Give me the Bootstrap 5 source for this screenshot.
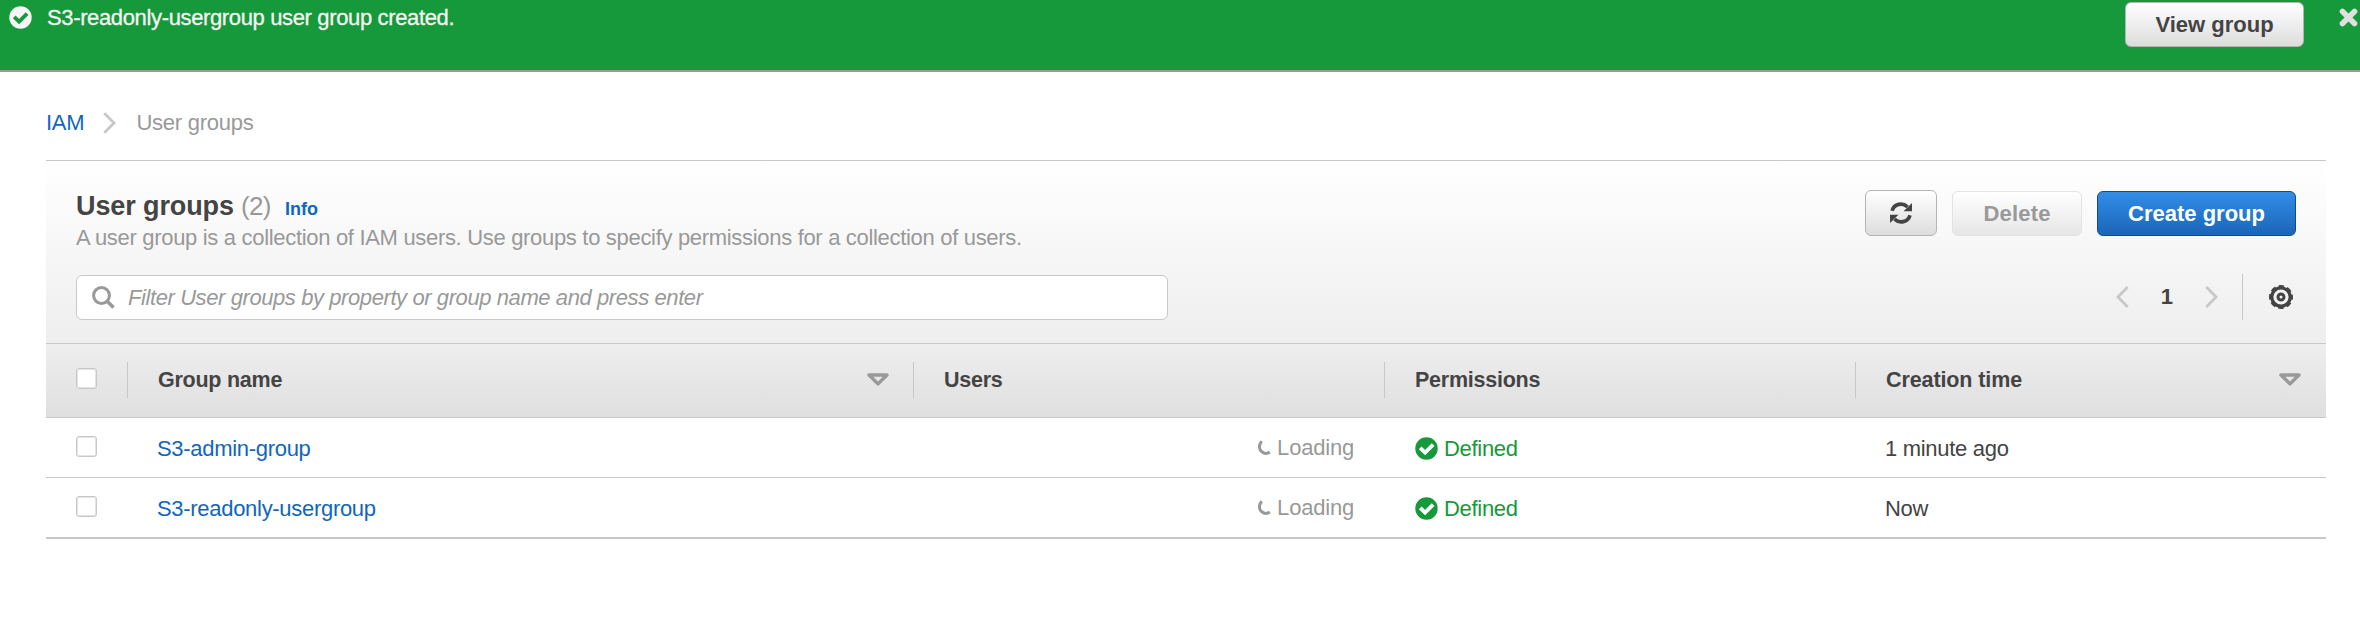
<!DOCTYPE html>
<html lang="en">
<head>
<meta charset="utf-8">
<title>IAM - User groups</title>
<link href="https://cdn.jsdelivr.net/npm/bootstrap@5.3.0/dist/css/bootstrap.min.css" rel="stylesheet">
<style>
body{font-family:"Liberation Sans",Arial,sans-serif;font-size:22px;line-height:30px;color:#444;background:#fff}
a{color:#1166bb;text-decoration:none}
svg{display:block;flex:none}
.flash{height:72px;background:#16993a;border-bottom:2px solid #999;color:#f5f5f5;padding:2px 2px 0 9px}
.flash-icon{margin-top:4px}
.flash-msg{margin:1px 0 0 15px;letter-spacing:-.36px;-webkit-text-stroke:.3px #f5f5f5}
.flash-close{margin:6px 0 0 35px}
.btn{--bs-btn-font-size:22px;--bs-btn-font-weight:700;--bs-btn-line-height:30px;--bs-btn-border-radius:6px;--bs-btn-padding-x:0;--bs-btn-padding-y:0;height:45px;display:flex;align-items:center;justify-content:center}
.btn-plain{color:#444;border-color:#b4b4b4;background:linear-gradient(#fff,#ddd)}
.btn-plain:disabled{color:#999;border-color:#e3e3e3;background:linear-gradient(#fff,#e6e6e6);opacity:1}
.btn-view{width:179px}
.btn-refresh{width:72px;height:46px}
.btn-delete{width:130px;letter-spacing:.2px}
.btn-create{width:199px;color:#fff;border-color:#15498a;background:linear-gradient(#338de8,#1a66b8)}
.page{padding:0 34px 0 46px}
.crumbs{height:88px;padding-top:13px;letter-spacing:-.24px}
.crumbs svg{margin:0 20px 0 19px}
.crumbs a,.crumbs span{margin-top:1px}
.muted{color:#999}
.panel-top{height:184px;border-top:1px solid #c8c8c8;border-bottom:1px solid #c8c8c8;background:linear-gradient(#fff,#eee);padding:29px 30px 0}
.heading-row{height:85px}
.panel-top h1{font-size:27px;line-height:31px;height:31px;font-weight:700;margin:1px 0;letter-spacing:-.1px}
.count{font-weight:400;font-size:26px;letter-spacing:-.6px;margin-left:7px}
.info{font-size:18px;letter-spacing:0;margin-left:14px}
.desc{letter-spacing:-.315px}
.actions{gap:15px;height:46px}
.filter{width:1092px;height:45px;border:1px solid #c8c8c8;border-radius:6px;background:#fff;padding:0 15px}
.filter input{font-style:italic;color:#444;letter-spacing:-.41px;margin-left:13px;border:0;outline:0;padding:0;background:none}
.filter input::placeholder{color:#999;opacity:1}
.pager{height:46px;margin-top:-1px;padding-right:3px;font-weight:700}
.page-no{margin:0 32px 0 32px}
.vline{width:1px;height:46px;background:#c8c8c8;margin:0 26px 0 24px}
.groups{--bs-table-bg:transparent;table-layout:fixed;margin:0;border-collapse:separate;border-spacing:0;width:2280px}
.groups th,.groups td{vertical-align:middle;border-bottom:1px solid #c8c8c8;color:#444}
.groups th{height:74px;font-size:21.5px;letter-spacing:-.25px;padding:0 25px 2px 30px;background:linear-gradient(#c8c8c8,#c8c8c8) right 18px/1px 36px no-repeat,linear-gradient(#eee,#dfdfdf)}
.groups th:last-child{background:linear-gradient(#eee,#dfdfdf);letter-spacing:-.1px}
.groups td{height:60px;padding:3px 31px 0 29px;letter-spacing:-.3px}
.groups tbody tr:last-child td{border-bottom-width:2px;height:61px}
.groups td:nth-child(4){padding-left:30px}
.box{width:21px;height:21px;border:1px solid #c8c8c8;border-radius:3px;background:#fff;appearance:none;display:block;box-shadow:inset 0 0 0 1px #e4e4e4;margin:0 0 2px}
td .box{margin:0 0 5px 1px}
.loading{color:#999;letter-spacing:-.2px;margin-top:-3px}
.loading svg{margin-right:6px}
.ok{color:#16993a}
.ok svg{margin:-2px 6px 0 0}
</style>
</head>
<body>
<svg class="d-none">
  <symbol id="i-tri" viewBox="0 0 22 13"><path d="M2 2h18L11 10.900z" fill="none" stroke="#999" stroke-width="3.400" stroke-linejoin="round"/></symbol>
  <symbol id="i-ok" viewBox="0 0 23 23"><circle cx="11.500" cy="11.500" r="11.200" fill="#16993a"/><path d="M5.200 10.800l4.900 4.700 8-7.800" fill="none" stroke="#fff" stroke-width="3.800"/></symbol>
  <symbol id="i-spin" viewBox="0 0 13 16"><path d="M3.800 1.200C.5 4.500.8 9.500 3.800 11.800 6.500 13.900 9.500 13.700 11.800 12" fill="none" stroke="#999" stroke-width="3"/></symbol>
</svg>
<div class="flash d-flex align-items-start">
  <svg class="flash-icon" width="23" height="23" viewBox="0 0 23 23"><circle cx="11.500" cy="11.500" r="11.200" fill="#f5f5f5"/><path d="M5.200 10.800l4.900 4.700 8-7.800" fill="none" stroke="#16993a" stroke-width="3.800"/></svg>
  <span class="flash-msg me-auto">S3-readonly-usergroup user group created.</span>
  <button class="btn btn-plain btn-view">View group</button>
  <svg class="flash-close" width="19" height="19" viewBox="0 0 19 19"><path d="M3.500 3.500l12 12M15.500 3.500l-12 12" stroke="#e0e0e0" stroke-width="5.600" stroke-linecap="round"/></svg>
</div>
<main class="page">
  <nav class="crumbs d-flex align-items-center">
    <a href="#">IAM</a>
    <svg width="13" height="22" viewBox="0 0 13 22"><path d="M1.300 1.300l9.700 9.700-9.700 9.700" fill="none" stroke="#c8c8c8" stroke-width="2.800"/></svg>
    <span class="muted">User groups</span>
  </nav>
  <section class="panel-top">
    <div class="heading-row d-flex justify-content-between align-items-start">
      <div>
        <h1 class="d-flex align-items-baseline">User groups<span class="muted count">(2)</span><a href="#" class="info">Info</a></h1>
        <div class="muted desc">A user group is a collection of IAM users. Use groups to specify permissions for a collection of users.</div>
      </div>
      <div class="actions d-flex align-items-end">
        <button class="btn btn-plain btn-refresh" aria-label="Refresh"><svg width="22" height="22" viewBox="0 0 22 22"><path d="M2 8.800C4.200 1.500 12.500.3 17.500 4.800M20 13.200C17.800 20.500 9.500 21.700 4.500 17.200" fill="none" stroke="#444" stroke-width="3.700"/><path d="M22 1v8.300h-8.500zM0 21v-8.300h8.500z" fill="#444"/></svg></button>
        <button class="btn btn-plain btn-delete" disabled>Delete</button>
        <button class="btn btn-create">Create group</button>
      </div>
    </div>
    <div class="d-flex justify-content-between align-items-start">
      <div class="filter d-flex align-items-center">
        <svg width="23" height="23" viewBox="0 0 23 23"><circle cx="9.500" cy="9.500" r="7.900" fill="none" stroke="#999" stroke-width="3"/><path d="M15 15l6.500 6.500" stroke="#999" stroke-width="3.600"/></svg>
        <input class="flex-grow-1" type="text" placeholder="Filter User groups by property or group name and press enter">
      </div>
      <div class="pager d-flex align-items-center">
        <svg width="13" height="22" viewBox="0 0 13 22"><path d="M11.700 1l-9.800 10 9.800 10" fill="none" stroke="#c8c8c8" stroke-width="2.800"/></svg>
        <span class="page-no">1</span>
        <svg width="13" height="22" viewBox="0 0 13 22"><path d="M1.300 1l9.800 10-9.800 10" fill="none" stroke="#c8c8c8" stroke-width="2.800"/></svg>
        <span class="vline"></span>
        <svg width="24" height="24" viewBox="0 0 24 24" fill="none" stroke="#444"><circle cx="12" cy="12" r="9.200" stroke-width="3.200"/><circle cx="12" cy="12" r="10.900" stroke-width="2.200" stroke-dasharray="5.400 3.161" stroke-dashoffset="2.700"/><circle cx="12" cy="12" r="3" stroke-width="3"/></svg>
      </div>
    </div>
  </section>
  <table class="table groups">
    <colgroup><col style="width:82px"><col style="width:786px"><col style="width:471px"><col style="width:471px"><col style="width:470px"></colgroup>
    <thead>
      <tr>
        <th><input class="box" type="checkbox" aria-label="Select all"></th>
        <th><div class="d-flex justify-content-between align-items-center">Group name<svg width="22" height="13"><use href="#i-tri"/></svg></div></th>
        <th>Users</th>
        <th>Permissions</th>
        <th><div class="d-flex justify-content-between align-items-center">Creation time<svg width="22" height="13"><use href="#i-tri"/></svg></div></th>
      </tr>
    </thead>
    <tbody>
      <tr>
        <td><input class="box" type="checkbox" aria-label="Select"></td>
        <td><a href="#">S3-admin-group</a></td>
        <td><div class="loading d-flex justify-content-end align-items-center"><svg width="13" height="16"><use href="#i-spin"/></svg>Loading</div></td>
        <td><div class="ok d-flex align-items-center"><svg width="23" height="23"><use href="#i-ok"/></svg>Defined</div></td>
        <td>1 minute ago</td>
      </tr>
      <tr>
        <td><input class="box" type="checkbox" aria-label="Select"></td>
        <td><a href="#">S3-readonly-usergroup</a></td>
        <td><div class="loading d-flex justify-content-end align-items-center"><svg width="13" height="16"><use href="#i-spin"/></svg>Loading</div></td>
        <td><div class="ok d-flex align-items-center"><svg width="23" height="23"><use href="#i-ok"/></svg>Defined</div></td>
        <td>Now</td>
      </tr>
    </tbody>
  </table>
</main>
<script src="https://cdn.jsdelivr.net/npm/bootstrap@5.3.0/dist/js/bootstrap.bundle.min.js"></script>
</body>
</html>
